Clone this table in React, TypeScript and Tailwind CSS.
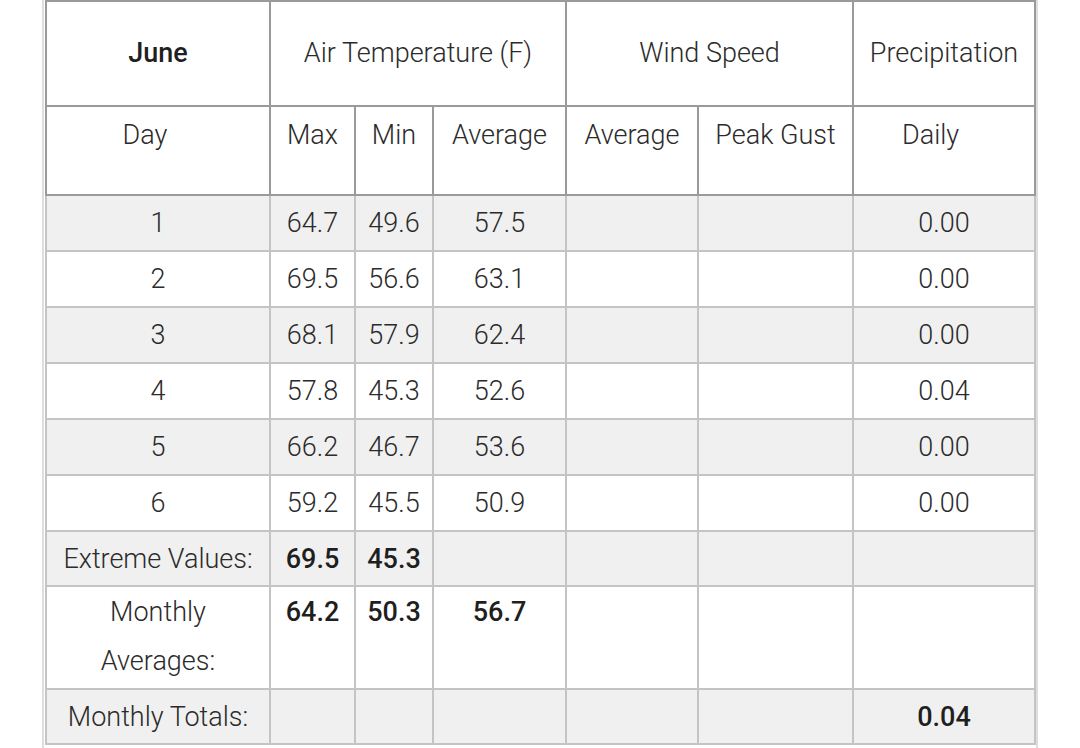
import React from "react";

const H = "border-2 border-[#9a9a9a]";
const B = "border-2 border-[#c4c4c4]";

type Row = { day: string; max: string; min: string; avg: string; precip: string; gray: boolean };

const rows: Row[] = [
  { day: "1", max: "64.7", min: "49.6", avg: "57.5", precip: "0.00", gray: true },
  { day: "2", max: "69.5", min: "56.6", avg: "63.1", precip: "0.00", gray: false },
  { day: "3", max: "68.1", min: "57.9", avg: "62.4", precip: "0.00", gray: true },
  { day: "4", max: "57.8", min: "45.3", avg: "52.6", precip: "0.04", gray: false },
  { day: "5", max: "66.2", min: "46.7", avg: "53.6", precip: "0.00", gray: true },
  { day: "6", max: "59.2", min: "45.5", avg: "50.9", precip: "0.00", gray: false },
];

export default function App() {
  return (
    <div
      className="min-h-screen bg-white"
      style={{ fontFamily: "Roboto, 'Liberation Sans', sans-serif" }}
    >
      <div className="ml-[42px] w-[996px] min-h-[748px] border-x-2 border-[#dedede] px-[1px]">
        <table className="w-[989px] border-collapse table-fixed text-[27px] leading-[49px] text-[#2b2b2b] font-light text-center">
          <colgroup>
            <col className="w-[224px]" />
            <col className="w-[85px]" />
            <col className="w-[78px]" />
            <col className="w-[133px]" />
            <col className="w-[132px]" />
            <col className="w-[155px]" />
            <col className="w-[182px]" />
          </colgroup>
          <thead>
            <tr className="h-[105px]">
              <th className={`${H} align-middle font-medium text-[#1f1f1f]`}>June</th>
              <th colSpan={3} className={`${H} align-middle font-light`}>
                Air Temperature (F)
              </th>
              <th colSpan={2} className={`${H} align-middle font-light`}>
                Wind Speed
              </th>
              <th className={`${H} align-middle font-light`}>Precipitation</th>
            </tr>
            <tr className="h-[89px]">
              <th className={`${H} align-top pt-[4px] pr-[26px] font-light`}>Day</th>
              <th className={`${H} align-top pt-[4px] font-light`}>Max</th>
              <th className={`${H} align-top pt-[4px] font-light`}>Min</th>
              <th className={`${H} align-top pt-[4px] font-light`}>Average</th>
              <th className={`${H} align-top pt-[4px] font-light`}>Average</th>
              <th className={`${H} align-top pt-[4px] font-light`}>Peak Gust</th>
              <th className={`${H} align-top pt-[4px] pr-[27px] font-light`}>Daily</th>
            </tr>
          </thead>
          <tbody>
            {rows.map((r) => (
              <tr key={r.day} className={`h-[56px] ${r.gray ? "bg-[#f0f0f0]" : "bg-white"}`}>
                <td className={`${B} align-top pt-[3px]`}>{r.day}</td>
                <td className={`${B} align-top pt-[3px]`}>{r.max}</td>
                <td className={`${B} align-top pt-[3px]`}>{r.min}</td>
                <td className={`${B} align-top pt-[3px]`}>{r.avg}</td>
                <td className={`${B} align-top pt-[3px]`}></td>
                <td className={`${B} align-top pt-[3px]`}></td>
                <td className={`${B} align-top pt-[3px]`}>{r.precip}</td>
              </tr>
            ))}
            <tr className="h-[55px] bg-[#f0f0f0]">
              <td className={`${B} align-top pt-[3px]`}>Extreme Values:</td>
              <td className={`${B} align-top pt-[3px] font-medium text-[#1f1f1f]`}>69.5</td>
              <td className={`${B} align-top pt-[3px] font-medium text-[#1f1f1f]`}>45.3</td>
              <td className={`${B}`}></td>
              <td className={`${B}`}></td>
              <td className={`${B}`}></td>
              <td className={`${B}`}></td>
            </tr>
            <tr className="h-[103px] bg-white">
              <td className={`${B} align-top pt-[1px]`}>
                Monthly
                <br />
                Averages:
              </td>
              <td className={`${B} align-top pt-[1px] font-medium text-[#1f1f1f]`}>64.2</td>
              <td className={`${B} align-top pt-[1px] font-medium text-[#1f1f1f]`}>50.3</td>
              <td className={`${B} align-top pt-[1px] font-medium text-[#1f1f1f]`}>56.7</td>
              <td className={`${B}`}></td>
              <td className={`${B}`}></td>
              <td className={`${B}`}></td>
            </tr>
            <tr className="h-[55px] bg-[#f0f0f0]">
              <td className={`${B} align-top pt-[3px]`}>Monthly Totals:</td>
              <td className={`${B}`}></td>
              <td className={`${B}`}></td>
              <td className={`${B}`}></td>
              <td className={`${B}`}></td>
              <td className={`${B}`}></td>
              <td className={`${B} align-top pt-[3px] font-medium text-[#1f1f1f]`}>0.04</td>
            </tr>
          </tbody>
        </table>
      </div>
    </div>
  );
}
